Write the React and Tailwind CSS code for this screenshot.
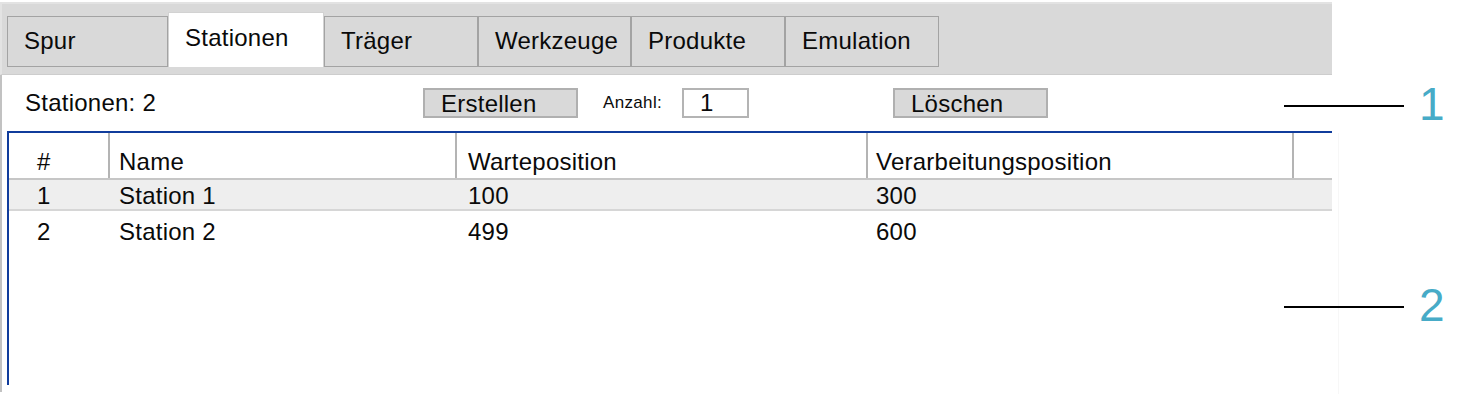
const tabs = [
  { label: "Spur", w: "w-[161px]" },
  { label: "Stationen", w: "w-[156px]", active: true },
  { label: "Träger", w: "w-[154px]" },
  { label: "Werkzeuge", w: "w-[153px]" },
  { label: "Produkte", w: "w-[154px]" },
  { label: "Emulation", w: "w-[154px]" },
];

// column widths include the 2px separator on the right
const cols = [
  { w: "w-[101px]", pl: "pl-[28px]" },
  { w: "w-[347px]", pl: "pl-[9px]" },
  { w: "w-[411px]", pl: "pl-[11px]" },
  { w: "w-[426px]", pl: "pl-[8px]" },
];

const headers = ["#", "Name", "Warteposition", "Verarbeitungsposition"];

const rows = [
  ["1", "Station 1", "100", "300"],
  ["2", "Station 2", "499", "600"],
];

const Tab = ({ label, w, active }) => {
  if (active) {
    return (
      <div className={`${w} h-[55px] bg-white border border-b-0 border-[#d2d2d2] flex items-center pl-[16px] pb-[4px]`}>
        {label}
      </div>
    );
  }
  return (
    <div className={`${w} h-[51px] bg-[#d9d9d9] border border-[#a3a3a3] flex items-center pl-[16px] pb-[2px]`}>
      {label}
    </div>
  );
};

const GrayButton = ({ children }) => (
  <button className="w-[155px] h-[30px] bg-[#d9d9d9] border-2 border-[#b0b0b0] text-left pl-[16px] leading-none pt-[1px]">
    {children}
  </button>
);

const App = () => {
  return (
    <div className="relative w-[1474px] h-[396px] bg-white flex font-['Liberation_Sans',Arial,sans-serif] text-[24px] tracking-[0.01em] text-[#0a0a0a]">
      <div className="w-[1332px] flex flex-col">
        {/* tab bar */}
        <div className="mt-[2px] h-[73px] bg-[#d9d9d9] border-t-2 border-l-2 border-[#e3e3e3] border-b border-b-[#cdcdcd] flex items-end pl-[5px] pb-[7px]">
          {tabs.map((t) => (
            <Tab key={t.label} {...t} />
          ))}
        </div>

        {/* body */}
        <div className="flex-1 flex flex-col border-l-2 border-[#c2c2c2] mb-[4px]">
          <div className="h-[56px] flex items-center shrink-0">
            <div className="w-[421px] pl-[23px]">Stationen: 2</div>
            <GrayButton>Erstellen</GrayButton>
            <div className="w-[104px] pl-[25px] text-[17px] tracking-[0.02em]">Anzahl:</div>
            <div className="w-[67px] h-[30px] border-2 border-[#b4b4b4] bg-white pl-[16px] flex items-center">1</div>
            <div className="w-[144px]" />
            <GrayButton>Löschen</GrayButton>
          </div>

          <div className="ml-[5px] h-[254px] border-t-2 border-l-2 border-[#103c9c] flex flex-col">
            <div className="h-[47px] flex border-b-2 border-[#c6c6c6] shrink-0">
              {headers.map((h, i) => (
                <div key={h} className={`${cols[i].w} ${cols[i].pl} border-r-2 border-[#b4b4b4] pt-[11px]`}>
                  {h}
                </div>
              ))}
            </div>
            {rows.map((r, ri) => (
              <div
                key={ri}
                className={
                  ri === 0
                    ? "h-[31px] flex items-center bg-[#eeeeee] border-b-2 border-[#d6d6d6] pt-[2px]"
                    : "h-[40px] flex items-center pt-[2px]"
                }
              >
                {r.map((c, i) => (
                  <div key={i} className={`${cols[i].w} ${cols[i].pl}`}>
                    {c}
                  </div>
                ))}
              </div>
            ))}
          </div>
        </div>
      </div>
      <div className="ml-[6px] mt-[133px] mb-[2px] w-px bg-[#f7f7f7]" />

      {/* callouts */}
      <div className="absolute left-[1284px] top-[105px] w-[120px] h-[2px] bg-black" />
      <div className="absolute left-[1419px] top-[81px] text-[46px] leading-none tracking-normal text-[#47abc7]">1</div>
      <div className="absolute left-[1284px] top-[306px] w-[120px] h-[2px] bg-black" />
      <div className="absolute left-[1419px] top-[282px] text-[46px] leading-none tracking-normal text-[#47abc7]">2</div>
    </div>
  );
};

export default App;
